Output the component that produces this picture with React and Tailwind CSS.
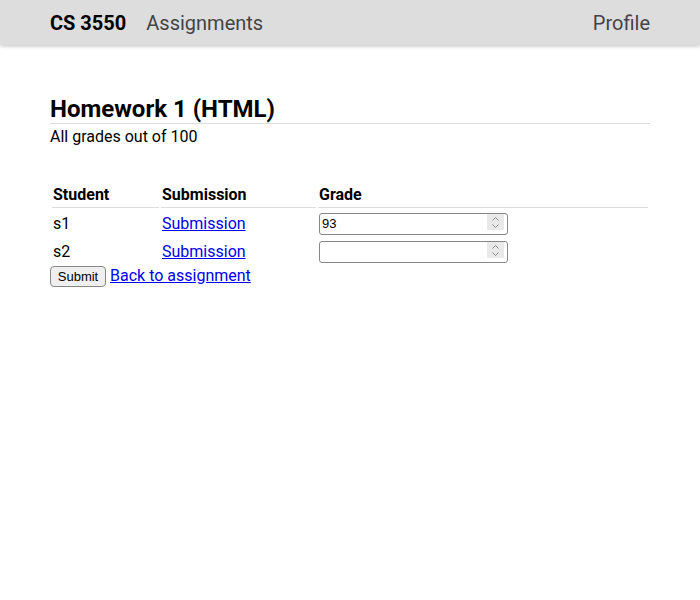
import React from 'react';

const rows = [
  { student: 's1', grade: '93' },
  { student: 's2', grade: '' },
];

function Spinner() {
  return (
    <div className="absolute right-[4px] top-[3px] w-[17px] h-[16px] bg-[#e9e9e9] flex flex-col items-center justify-center pointer-events-none">
      <svg width="9" height="13" viewBox="0 0 9 13" fill="none" stroke="#8a8a8a" strokeWidth="1">
        <path d="M1.5 4.5 L4.5 1.5 L7.5 4.5" />
        <path d="M1.5 8.5 L4.5 11.5 L7.5 8.5" />
      </svg>
    </div>
  );
}

export default function App() {
  return (
    <div className="min-h-[600px] bg-white text-black font-['Roboto',sans-serif]">
      <header className="h-[45px] bg-[#dddddd] shadow-[0_1px_4px_rgba(0,0,0,0.25)] flex items-center px-[50px] text-[20px]">
        <span className="font-bold text-black">CS 3550</span>
        <a href="#" className="ml-5 text-[#444]">Assignments</a>
        <a href="#" className="ml-auto text-[#444]">Profile</a>
      </header>

      <main className="px-[50px] pt-[51px]">
        <h1 className="text-[24px] font-bold leading-[27px] border-b border-[#dddddd]">Homework 1 (HTML)</h1>
        <p className="mt-[1px] text-[16px] leading-6">All grades out of 100</p>

        <form className="mt-[32px]">
          <table className="w-full border-separate border-spacing-[2px] text-[16px]">
            <thead>
              <tr>
                <th className="text-left font-bold px-[1px] pb-0 leading-6 border-b border-[#dddddd] w-[107px]">Student</th>
                <th className="text-left font-bold px-[1px] pb-0 leading-6 border-b border-[#dddddd] w-[155px]">Submission</th>
                <th className="text-left font-bold px-[1px] pb-0 leading-6 border-b border-[#dddddd]">Grade</th>
              </tr>
            </thead>
            <tbody>
              {rows.map((r) => (
                <tr key={r.student}>
                  <td className="px-[1px] pt-[2px] pb-0 leading-6 align-middle">{r.student}</td>
                  <td className="px-[1px] pt-[2px] pb-0 leading-6 align-middle">
                    <a href="#" className="text-[#0000ee] underline">Submission</a>
                  </td>
                  <td className="px-[1px] pt-0 pb-[2px] align-middle">
                    <div className="relative w-[189px] h-[22px]">
                      <input
                        type="number"
                        defaultValue={r.grade}
                        className="w-[189px] h-[22px] border border-[#888] rounded-[3px] px-[2px] text-[13px] font-['Liberation_Sans',sans-serif] bg-white [appearance:textfield] [&::-webkit-inner-spin-button]:appearance-none"
                      />
                      <Spinner />
                    </div>
                  </td>
                </tr>
              ))}
            </tbody>
          </table>
          <div className="-mt-[2px] flex items-center gap-1 text-[16px]">
            <button type="button" className="w-[56px] h-[21px] bg-[#efefef] border border-[#888] rounded-[4px] text-[13px] font-['Liberation_Sans',sans-serif]">Submit</button>
            <a href="#" className="text-[#0000ee] underline">Back to assignment</a>
          </div>
        </form>
      </main>
    </div>
  );
}
